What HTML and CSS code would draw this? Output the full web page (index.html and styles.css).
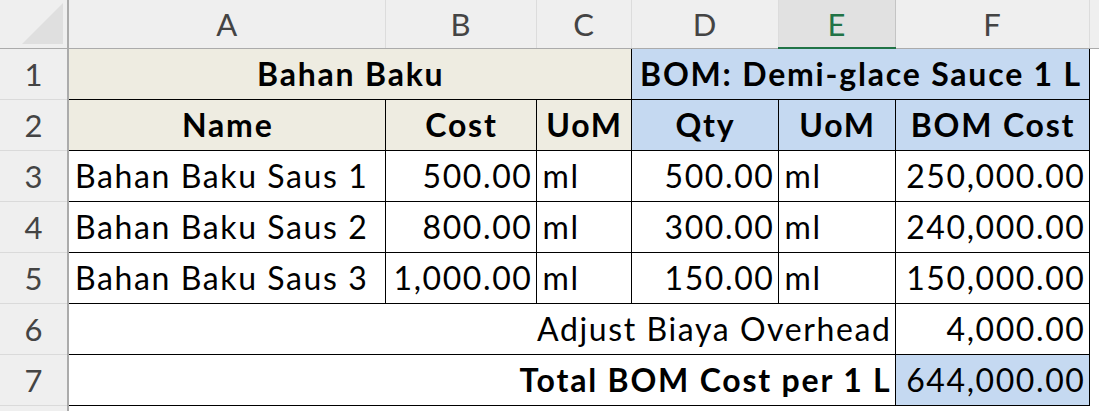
FILE: index.html
```html
<!DOCTYPE html>
<html>
<head>
<meta charset="utf-8">
<link rel="stylesheet" href="styles.css">
</head>
<body>
<table class="sheet">
  <colgroup>
    <col class="c-hdr"><col class="c-a"><col class="c-b"><col class="c-c"><col class="c-d"><col class="c-e"><col class="c-f"><col class="c-g">
  </colgroup>
  <thead>
    <tr class="colhdr">
      <th class="corner"><span class="tri"></span></th>
      <th>A</th><th>B</th><th>C</th><th>D</th><th class="sel">E</th><th>F</th><th class="last"></th>
    </tr>
  </thead>
  <tbody>
    <tr>
      <th class="rowhdr">1</th>
      <td colspan="3" class="tan bold center b-r b-b">Bahan Baku</td>
      <td colspan="3" class="blue bold center b-r b-b">BOM: Demi-glace Sauce 1 L</td>
      <td class="empty"></td>
    </tr>
    <tr>
      <th class="rowhdr">2</th>
      <td class="tan bold center b-r b-b">Name</td>
      <td class="tan bold center b-r b-b">Cost</td>
      <td class="tan bold center b-r b-b">UoM</td>
      <td class="blue bold center b-r b-b">Qty</td>
      <td class="blue bold center b-r b-b">UoM</td>
      <td class="blue bold center b-r b-b">BOM Cost</td>
      <td class="empty"></td>
    </tr>
    <tr>
      <th class="rowhdr">3</th>
      <td class="left b-r b-b">Bahan Baku Saus 1</td>
      <td class="right b-r b-b">500.00</td>
      <td class="left b-r b-b">ml</td>
      <td class="right b-r b-b">500.00</td>
      <td class="left b-r b-b">ml</td>
      <td class="right b-r b-b">250,000.00</td>
      <td class="empty"></td>
    </tr>
    <tr>
      <th class="rowhdr">4</th>
      <td class="left b-r b-b">Bahan Baku Saus 2</td>
      <td class="right b-r b-b">800.00</td>
      <td class="left b-r b-b">ml</td>
      <td class="right b-r b-b">300.00</td>
      <td class="left b-r b-b">ml</td>
      <td class="right b-r b-b">240,000.00</td>
      <td class="empty"></td>
    </tr>
    <tr>
      <th class="rowhdr">5</th>
      <td class="left b-r b-b">Bahan Baku Saus 3</td>
      <td class="right b-r b-b">1,000.00</td>
      <td class="left b-r b-b">ml</td>
      <td class="right b-r b-b">150.00</td>
      <td class="left b-r b-b">ml</td>
      <td class="right b-r b-b">150,000.00</td>
      <td class="empty"></td>
    </tr>
    <tr>
      <th class="rowhdr">6</th>
      <td colspan="5" class="right b-r b-b">Adjust Biaya Overhead</td>
      <td class="right b-r b-b">4,000.00</td>
      <td class="empty"></td>
    </tr>
    <tr>
      <th class="rowhdr">7</th>
      <td colspan="5" class="right bold b-r b-b">Total BOM Cost per 1 L</td>
      <td class="right blue b-r b-b">644,000.00</td>
      <td class="empty"></td>
    </tr>
    <tr class="tail">
      <th class="rowhdr"></th>
      <td></td><td></td><td></td><td></td><td></td><td></td><td class="empty"></td>
    </tr>
  </tbody>
</table>
</body>
</html>
```
FILE: styles.css
```css
html, body {
  margin: 0;
  padding: 0;
  background: #ffffff;
}
body {
  width: 1099px;
  height: 411px;
  overflow: hidden;
  font-family: "Lato", "Liberation Sans", sans-serif;
}
.sheet {
  border-collapse: collapse;
  table-layout: fixed;
  width: 1099px;
}
.c-hdr { width: 68px; }
.c-a { width: 317px; }
.c-b { width: 151px; }
.c-c { width: 95px; }
.c-d { width: 147px; }
.c-e { width: 117px; }
.c-f { width: 194px; }
.c-g { width: 10px; }

.colhdr th {
  height: 47px;
  padding: 0;
  background: #efefef;
  color: #444444;
  font-weight: normal;
  font-size: 31px;
  text-align: center;
  vertical-align: middle;
  border-bottom: 1px solid #ababab;
  border-right: 1px solid #dcdcdc;
}
.colhdr th.corner {
  position: relative;
  border-right: 2px solid #ababab;
}
.tri {
  position: absolute;
  right: 4px;
  bottom: 4px;
  width: 0;
  height: 0;
  border-style: solid;
  border-width: 0 0 41px 41px;
  border-color: transparent transparent #dfdfdf transparent;
}
.colhdr th.sel {
  background: #e1e1e1;
  color: #217346;
  border-bottom: 2px solid #217346;
  border-right: 1px solid #c4c4c4;
}
.colhdr th.last {
  border-right: none;
}
.rowhdr {
  height: 50px;
  padding: 0;
  background: #efefef;
  color: #444444;
  font-weight: normal;
  font-size: 31px;
  text-align: center;
  vertical-align: middle;
  border-right: 2px solid #ababab;
  border-bottom: 1px solid #dadada;
}
td {
  padding: 0 4px 0 6px;
  font-size: 32px;
  letter-spacing: 1.6px;
  color: #000000;
  white-space: nowrap;
  overflow: hidden;
  vertical-align: middle;
}
.bold { font-weight: bold; letter-spacing: 1.8px; }
.center { text-align: center; }
.right { text-align: right; padding-right: 3px; }
.left { text-align: left; }
.tan { background: #eeece1; }
.blue { background: #c5d9f1; }
.b-r { border-right: 1px solid #000000; }
.b-b { border-bottom: 1px solid #000000; }
.tail td, .tail th { height: 6px; }
```
